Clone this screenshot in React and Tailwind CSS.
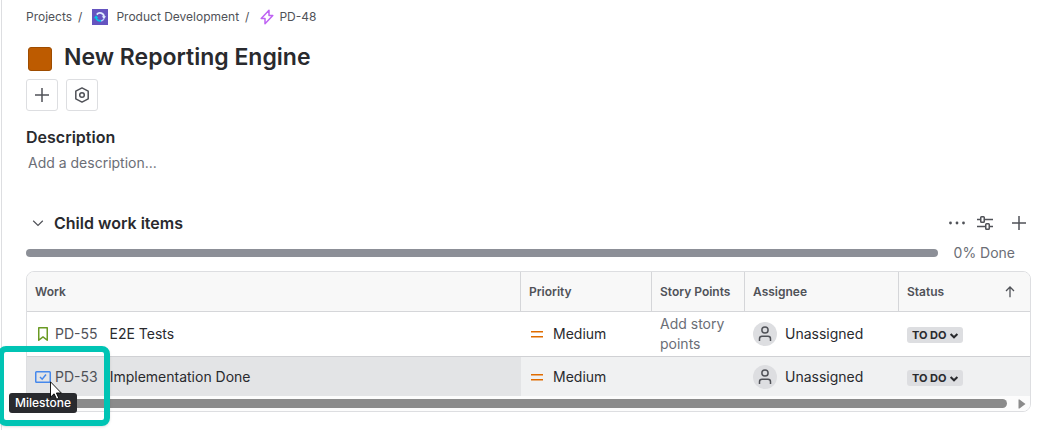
import React from "react";
import { clsx } from "clsx";

const items = [
  { key: "PD-55", type: "story", summary: "E2E Tests", points: "Add story points" },
  { key: "PD-53", type: "milestone", summary: "Implementation Done", hovered: true },
];

function ProjectAvatar() {
  return (
    <svg viewBox="0 0 16 16" className="w-4 h-4" aria-hidden="true">
      <rect width="16" height="16" fill="#6554c0" />
      <path d="M4 8.6A4 4 0 0 0 9 11.7" fill="none" stroke="#00c7e6" strokeWidth="1.8" />
      <path d="M1.8 9.2L4 6.2l2.4 2.8z" fill="#00c7e6" />
      <path d="M4.8 5.6A4 4 0 0 1 12 8" fill="none" stroke="#deebff" strokeWidth="1.8" />
      <path d="M9.8 7.2h4.2L12 10.2z" fill="#deebff" />
      <path d="M9.2 12A4.4 4.4 0 0 0 11.8 10" fill="none" stroke="#b3d4ff" strokeWidth="1.4" />
    </svg>
  );
}

function EpicIcon() {
  return (
    <svg viewBox="0 0 16 16" className="w-4 h-4" fill="none" stroke="#bf63f3" strokeWidth="1.5" strokeLinejoin="round" aria-hidden="true">
      <path d="M10 1.2v5.3h3.8L6 14.8V9.5H2.2z" />
    </svg>
  );
}

function TypeIcon({ type }) {
  if (type === "story") {
    return (
      <svg viewBox="0 0 16 16" className="w-4 h-4" fill="none" stroke="#6a9a23" strokeWidth="1.5" strokeLinejoin="round" aria-hidden="true">
        <path d="M3.75 1.75h8.5v12.5L8 10.9l-4.25 3.35z" />
      </svg>
    );
  }
  return (
    <svg viewBox="0 0 16 16" className="w-4 h-4" fill="none" stroke="#4688ec" strokeWidth="1.5" aria-hidden="true">
      <rect x="0.75" y="2.75" width="14.5" height="10.5" rx="0.8" />
      <path d="M5 8l2.2 2.2L11 5.6" />
    </svg>
  );
}

function PriorityIcon() {
  return (
    <svg viewBox="0 0 16 16" className="w-4 h-4" fill="none" stroke="#e06c00" strokeWidth="1.5" aria-hidden="true">
      <path d="M2 5.75h12M2 10.75h12" />
    </svg>
  );
}

function PlusIcon() {
  return (
    <svg viewBox="0 0 16 16" className="w-4 h-4" fill="none" stroke="currentColor" strokeWidth="1.5" aria-hidden="true">
      <path d="M8 1v14M1 8h14" />
    </svg>
  );
}

function Assignee() {
  return (
    <div className="flex items-center gap-2">
      <span className="flex items-center justify-center w-6 h-6 rounded-full bg-[#dddee1] text-[#505258]">
        <svg viewBox="0 0 16 16" className="w-4 h-4" fill="none" stroke="currentColor" strokeWidth="1.5" aria-hidden="true">
          <circle cx="8" cy="4" r="3.1" />
          <path d="M2.5 15v-2.2a2.5 2.5 0 0 1 2.5-2.5h6a2.5 2.5 0 0 1 2.5 2.5V15" />
        </svg>
      </span>
      Unassigned
    </div>
  );
}

function StatusSelect({ label }) {
  return (
    <div className="relative w-14 h-4 mt-0.5">
      <select
        aria-label={label}
        className="block w-full h-4 pl-[5px] appearance-none rounded-[3px] bg-[#dddee1] text-[11px] leading-4 font-bold text-[#292a2e] cursor-pointer"
      >
        <option>TO DO</option>
      </select>
      <svg
        viewBox="0 0 10 10"
        className="absolute right-1 top-[4px] w-2.5 h-2.5 pointer-events-none"
        fill="none"
        stroke="#292a2e"
        strokeWidth="2"
        aria-hidden="true"
      >
        <path d="M1.6 3l3.4 3.3L8.4 3" />
      </svg>
    </div>
  );
}

const thClass =
  "h-10 px-2 text-left text-xs font-semibold text-[#505258] bg-[#f8f8f8] border-b border-[#d5d6d9]";

function WorkItemsTable() {
  return (
    <div className="border border-[#dddee1] rounded-lg overflow-hidden">
      <table className="w-full table-fixed border-separate border-spacing-0 text-sm leading-5">
        <colgroup>
          <col />
          <col className="w-[131px]" />
          <col className="w-[93px]" />
          <col className="w-[154px]" />
          <col className="w-[131px]" />
        </colgroup>
        <thead>
          <tr>
            <th className={clsx(thClass, "border-r")}>Work</th>
            <th className={clsx(thClass, "border-r")}>Priority</th>
            <th className={clsx(thClass, "border-r whitespace-nowrap")}>Story Points</th>
            <th className={clsx(thClass, "border-r")}>Assignee</th>
            <th className={thClass}>
              <div className="flex items-center justify-between pr-1">
                Status
                <svg viewBox="0 0 16 16" className="w-4 h-4" fill="none" stroke="currentColor" strokeWidth="1.3" aria-hidden="true">
                  <path d="M8 13.2V3.2M4 7l4-4 4 4" />
                </svg>
              </div>
            </th>
          </tr>
        </thead>
        <tbody>
          {items.map((item) => {
            const tdClass = clsx(
              "px-2 text-[#292a2e]",
              item.hovered ? "h-[39px] bg-[#f0f1f2]" : "h-[45px] border-b border-[#d0d1d4]"
            );
            return (
              <tr key={item.key}>
                <td className={clsx(tdClass, item.hovered && "bg-[#e3e4e6]!")}>
                  <div className="flex items-center gap-1">
                    <TypeIcon type={item.type} />
                    <a href={"#" + item.key} className="text-[#505258]">{item.key}</a>
                    <a href={"#" + item.key} className="ml-2">{item.summary}</a>
                  </div>
                </td>
                <td className={tdClass}>
                  <div className="flex items-center gap-2">
                    <PriorityIcon />
                    Medium
                  </div>
                </td>
                <td className={clsx(tdClass, "text-[#6b6e76]!")}>{item.points}</td>
                <td className={tdClass}>
                  <Assignee />
                </td>
                <td className={tdClass}>
                  <StatusSelect label={item.key + " status"} />
                </td>
              </tr>
            );
          })}
        </tbody>
      </table>

      {/* Horizontal scroll track */}
      <div className="flex items-center justify-between h-[15px] pr-1 bg-[#fcfcfc]">
        <div className="grow h-[9px] mr-[11px] rounded-full bg-[#8b8b8b]" />
        <svg viewBox="0 0 8 10" className="w-2 h-2.5" fill="#8b8b8b" aria-hidden="true">
          <path d="M0.5 0.5h1L7.5 5l-6 4.5h-1z" />
        </svg>
      </div>
    </div>
  );
}

export default function App() {
  return (
    <div className="ml-px border-l border-[#dddee1] min-h-screen bg-white font-['Inter',sans-serif] text-[#292a2e]">
      <main className="pl-6 pr-3 pt-[7px]">
        <nav aria-label="Breadcrumb" className="flex items-center h-5 text-xs text-[#505258]">
          <a href="#projects">Projects</a>
          <span className="mx-1.5">/</span>
          <a href="#product" className="flex items-center gap-2 ml-1">
            <ProjectAvatar />
            Product Development
          </a>
          <span className="mx-1.5">/</span>
          <a href="#PD-48" className="flex items-center gap-1 ml-1">
            <EpicIcon />
            PD-48
          </a>
        </nav>

        <div className="flex items-end h-7 gap-3 mt-4 pl-0.5">
          <button type="button" aria-label="Epic colour" className="w-6 h-6 rounded-[3px] bg-[#bd5b00] border border-[#9e4c00]" />
          <h1 className="text-[23px] leading-7 font-semibold">New Reporting Engine</h1>
        </div>

        <div className="flex gap-2 mt-2 text-[#505258]">
          <button type="button" aria-label="Add" className="flex items-center justify-center w-8 h-8 border border-[#dddee1] rounded-[3px]">
            <PlusIcon />
          </button>
          <button type="button" aria-label="Apps" className="flex items-center justify-center w-8 h-8 border border-[#dddee1] rounded-[3px]">
            <svg viewBox="0 0 16 16" className="w-4 h-4" fill="none" stroke="currentColor" strokeWidth="1.5" strokeLinejoin="round" aria-hidden="true">
              <path d="M8 0.9l6.2 3.3v7.6L8 15.1l-6.2-3.3V4.2z" />
              <circle cx="8" cy="8" r="2.3" />
            </svg>
          </button>
        </div>

        <h2 className="mt-4 text-base leading-5 font-semibold">Description</h2>
        <button type="button" className="block mt-1.5 pl-0.5 text-sm leading-5 text-[#6b6e76]">
          Add a description...
        </button>

        <div className="flex items-center h-6 mt-[38px]">
          <button type="button" aria-label="Collapse" className="flex items-center justify-center w-6 h-6 mr-1 text-[#505258]">
            <svg viewBox="0 0 12 12" className="w-3 h-3" fill="none" stroke="currentColor" strokeWidth="1.2" aria-hidden="true">
              <path d="M1.2 3.8L6 8.4l4.8-4.6" />
            </svg>
          </button>
          <h2 className="text-base leading-6 font-semibold">Child work items</h2>
          <div className="flex items-center gap-1 ml-auto text-[#505258]">
            <button type="button" aria-label="More actions" className="flex items-center justify-center w-6 h-6">
              <svg viewBox="0 0 16 16" className="w-4 h-4" fill="currentColor" aria-hidden="true">
                <circle cx="1.5" cy="8" r="1.4" />
                <circle cx="8" cy="8" r="1.4" />
                <circle cx="14.5" cy="8" r="1.4" />
              </svg>
            </button>
            <button type="button" aria-label="Configure" className="flex items-center justify-center w-6 h-6 mr-1.5">
              <svg viewBox="0 0 16 16" className="w-4 h-4" fill="none" stroke="currentColor" strokeWidth="1.5" aria-hidden="true">
                <path d="M0 4.5h3.5M7.5 4.5H16M0 11.5h8.5M12.5 11.5H16" />
                <rect x="3.75" y="1.75" width="3.5" height="5.5" rx="0.8" />
                <rect x="8.75" y="8.75" width="3.5" height="5.5" rx="0.8" />
              </svg>
            </button>
            <button type="button" aria-label="Create child item" className="flex items-center justify-center w-6 h-6">
              <PlusIcon />
            </button>
          </div>
        </div>

        <div className="flex items-center gap-4 h-5 mt-2 pr-4">
          <div className="grow h-2 rounded-full bg-[#8c8f97]" />
          <span className="text-sm leading-5 text-[#6b6e76]">0% Done</span>
        </div>

        <div className="relative mt-2">
          <WorkItemsTable />

          {/* Hover tooltip, pointer and callout frame over the milestone row */}
          <div className="absolute -left-7 top-[75px] w-28 h-20 border-[6px] border-[#00c4b4] rounded-lg shadow-sm pointer-events-none" />
          <div role="tooltip" className="absolute -left-[17px] top-[122px] px-1.5 rounded-[3px] bg-[#292a2e] text-xs leading-5 font-medium text-white">
            Milestone
          </div>
          <svg viewBox="0 0 12 19" className="absolute left-6 top-[110px] w-3 h-[19px]" aria-hidden="true">
            <path
              d="M0.5 0.8v15.4l3.6-3.4 2.5 5.4 2.2-1-2.4-5.2h4.9z"
              fill="#fff"
              stroke="#000"
              strokeWidth="0.9"
            />
          </svg>
        </div>
      </main>
    </div>
  );
}
